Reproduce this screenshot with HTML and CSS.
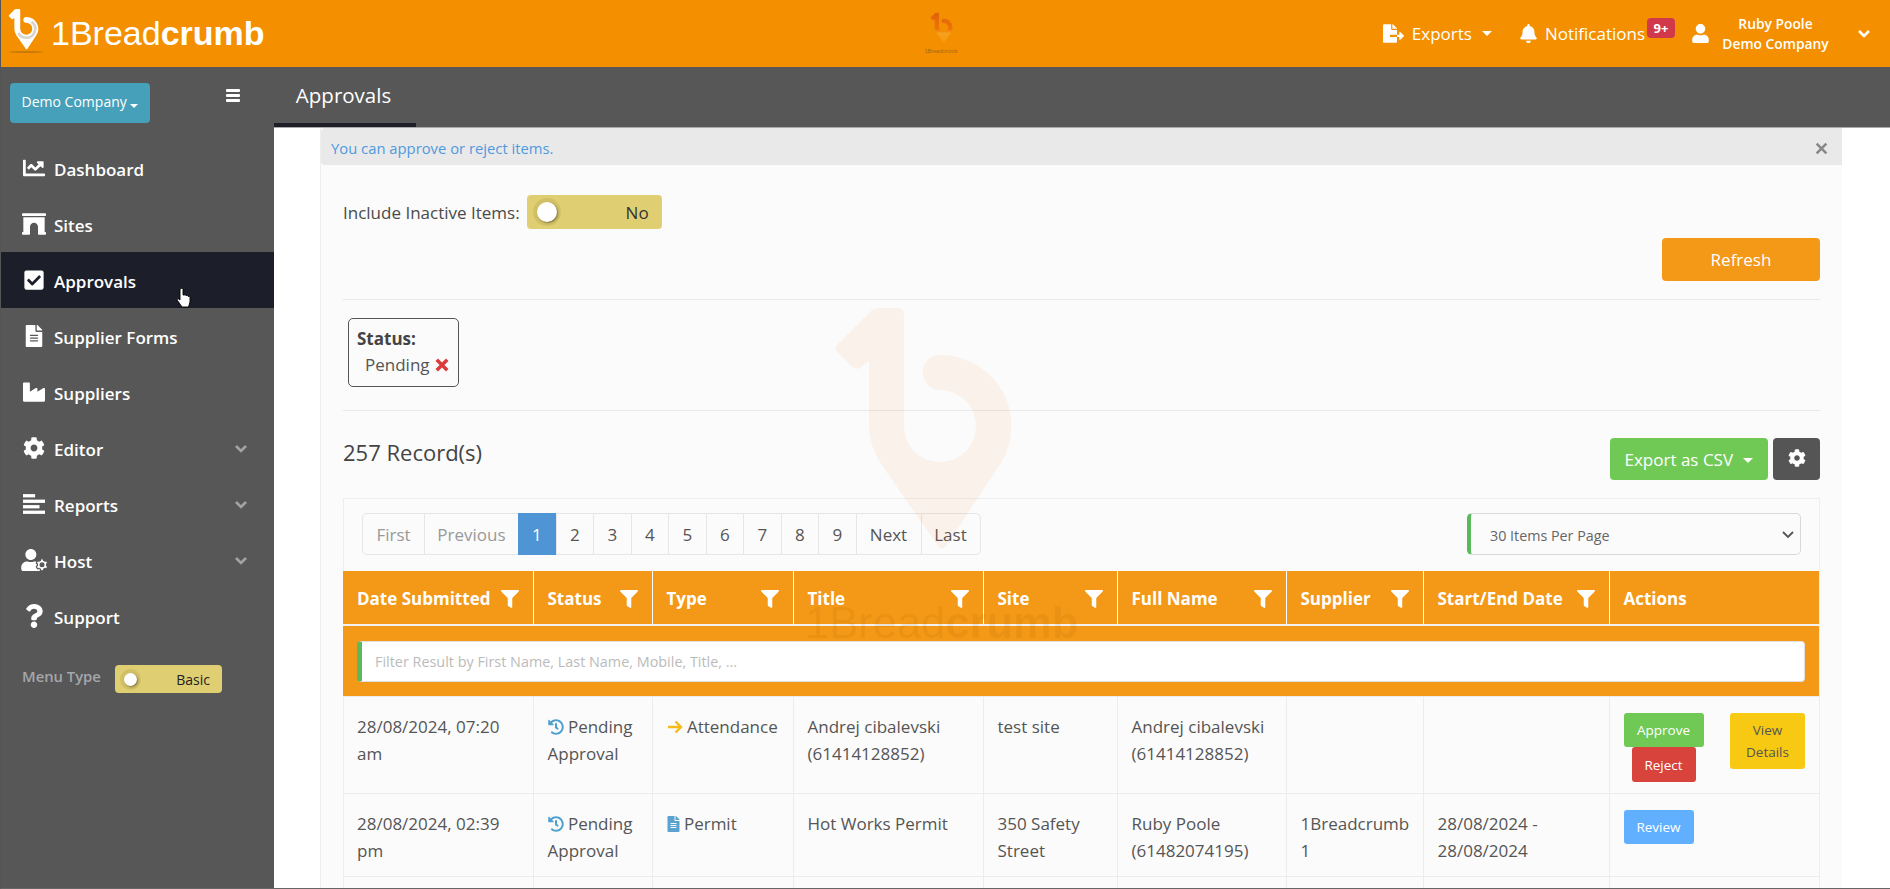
FILE: index.html
```html
<!DOCTYPE html>
<html lang="en">
<head>
    <meta charset="UTF-8">
    <title>Approvals</title>
    <link rel="stylesheet" href="styles.css">
</head>
<body>
<svg class="defs">
    <defs>
        <path id="pin" d="M97 17 L116 17 Q123 17 123 24 L123 135 A36 36 0 1 0 159 99 A17.5 17.5 0 0 1 159 64 A71 71 0 0 1 220 172 L165 255 Q161 260 157 255 L100 173 A71 71 0 0 1 88 135 L88 70 L79 77 Q74 79 70 75 L56 61 Q53 57 57 53 L90 20 Q93 17 97 17 Z"/>
        <path id="i-cog" d="M487.4 315.7l-42.6-24.6c4.3-23.2 4.3-47 0-70.2l42.6-24.6c4.9-2.8 7.1-8.6 5.5-14-11.1-35.6-30-67.8-54.7-94.6-3.8-4.1-10-5.1-14.8-2.3L380.8 110c-17.9-15.4-38.5-27.3-60.8-35.1V25.8c0-5.6-3.9-10.5-9.4-11.7-36.7-8.2-74.3-7.8-109.2 0-5.5 1.2-9.4 6.1-9.4 11.7V75c-22.2 7.9-42.8 19.8-60.8 35.1L88.7 85.5c-4.9-2.8-11-1.9-14.8 2.3-24.7 26.7-43.6 58.9-54.7 94.6-1.7 5.4.6 11.2 5.5 14L67.3 221c-4.3 23.2-4.3 47 0 70.2l-42.6 24.6c-4.9 2.8-7.1 8.6-5.5 14 11.1 35.6 30 67.8 54.7 94.6 3.8 4.1 10 5.1 14.8 2.3l42.6-24.6c17.9 15.4 38.5 27.3 60.8 35.1v49.2c0 5.6 3.9 10.5 9.4 11.7 36.7 8.2 74.3 7.8 109.2 0 5.5-1.2 9.4-6.1 9.4-11.7v-49.2c22.2-7.9 42.8-19.8 60.8-35.1l42.6 24.6c4.9 2.8 11 1.9 14.8-2.3 24.7-26.7 43.6-58.9 54.7-94.6 1.5-5.5-.7-11.3-5.6-14.1zM256 336c-44.1 0-80-35.9-80-80s35.9-80 80-80 80 35.9 80 80-35.9 80-80 80z"/>
        <path id="i-filter" d="M487.976 0H24.028C2.71 0-8.047 25.866 7.058 40.971L192 225.941V432c0 7.831 3.821 15.17 10.237 19.662l80 55.98C298.02 518.69 320 507.493 320 487.98V225.941l184.947-184.97C520.021 25.896 509.338 0 487.976 0z"/>
        <path id="i-history" d="M504 255.531c.253 136.64-111.18 248.372-247.82 248.468-59.015.042-113.223-20.53-155.822-54.911-11.077-8.94-11.905-25.541-1.839-35.607l11.267-11.267c8.609-8.609 22.353-9.551 31.891-1.984C173.062 425.135 212.781 440 256 440c101.705 0 184-82.311 184-184 0-101.705-82.311-184-184-184-48.814 0-93.149 18.969-126.068 49.932l50.754 50.754c10.08 10.08 2.941 27.314-11.313 27.314H24c-8.837 0-16-7.163-16-16V38.627c0-14.254 17.234-21.393 27.314-11.314l49.372 49.372C129.209 34.136 189.552 8 256 8c136.81 0 247.747 110.78 248 247.531zm-180.912 78.784l9.823-12.63c8.138-10.463 6.253-25.542-4.21-33.679L288 256.349V152c0-13.255-10.745-24-24-24h-16c-13.255 0-24 10.745-24 24v135.651l65.409 50.874c10.463 8.137 25.541 6.253 33.679-4.21z"/>
        <path id="i-file" d="M224 136V0H24C10.7 0 0 10.7 0 24v464c0 13.3 10.7 24 24 24h336c13.3 0 24-10.7 24-24V160H248c-13.2 0-24-10.8-24-24zm64 236c0 6.6-5.4 12-12 12H108c-6.6 0-12-5.4-12-12v-8c0-6.6 5.4-12 12-12h168c6.6 0 12 5.4 12 12v8zm0-64c0 6.6-5.4 12-12 12H108c-6.6 0-12-5.4-12-12v-8c0-6.6 5.4-12 12-12h168c6.6 0 12 5.4 12 12v8zm0-72v8c0 6.6-5.4 12-12 12H108c-6.6 0-12-5.4-12-12v-8c0-6.6 5.4-12 12-12h168c6.6 0 12 5.4 12 12zm96-114.1v6.1H256V0h6.1c6.4 0 12.5 2.5 17 7l97.9 98c4.5 4.5 7 10.6 7 16.9z"/>
        <path id="i-user" d="M224 256c70.7 0 128-57.3 128-128S294.7 0 224 0 96 57.3 96 128s57.3 128 128 128zm89.6 32h-16.7c-22.2 10.2-46.9 16-72.9 16s-50.6-5.8-72.9-16h-16.7C60.2 288 0 348.2 0 422.4V464c0 26.5 21.5 48 48 48h352c26.5 0 48-21.5 48-48v-41.6c0-74.2-60.2-134.4-134.4-134.4z"/>
        <linearGradient id="small-pin" x1="0" y1="0" x2="0" y2="1">
            <stop offset="0" stop-color="#e2610c"/>
            <stop offset="0.55" stop-color="#ec7408"/>
            <stop offset="0.68" stop-color="#f6a01c"/>
            <stop offset="1" stop-color="#f59a10"/>
        </linearGradient>
    </defs>
</svg>

<div class="app">
    <header class="topbar">
        <div class="brand">
            <span class="brand-mark">
                <svg class="brand-pin" viewBox="50 15 185 248"><use href="#pin"/><path class="brand-shade" d="M190 92 A53 53 0 0 1 159 188 A53 53 0 0 1 112 160"/></svg>
                <span class="brand-shadow"></span>
            </span>
            <span class="brand-name">1Bread<b>crumb</b></span>
        </div>
        <div class="client-logo">
            <svg class="client-pin" viewBox="50 15 185 248"><use href="#pin"/></svg>
            <span class="client-name">1Breadcrumb</span>
        </div>
        <nav class="topnav">
            <a class="topnav-item">
                <svg class="top-icon icon-export" viewBox="0 0 576 512"><path d="M384 121.9c0-6.3-2.5-12.4-7-16.9L279.1 7c-4.5-4.5-10.6-7-17-7H256v128h128zM571 308l-95.7-96.4c-10.1-10.1-27.4-3-27.4 11.3V288h-64v64h64v65.2c0 14.3 17.3 21.4 27.4 11.3L571 332c6.6-6.6 6.6-17.4 0-24zm-379 28v-32c0-8.8 7.2-16 16-16h176V160H248c-13.2 0-24-10.8-24-24V0H24C10.7 0 0 10.7 0 24v464c0 13.3 10.7 24 24 24h336c13.3 0 24-10.7 24-24V352H208c-8.8 0-16-7.2-16-16z"/></svg>
                Exports <span class="caret"></span>
            </a>
            <a class="topnav-item notif">
                <svg class="top-icon icon-bell" viewBox="0 0 448 512"><path d="M224 512c35.32 0 63.97-28.65 63.97-64H160.03c0 35.35 28.65 64 63.97 64zm215.39-149.71c-19.32-20.76-55.47-51.99-55.47-154.29 0-77.7-54.48-139.9-127.94-155.16V32c0-17.67-14.32-32-31.98-32s-31.98 14.33-31.98 32v20.84C118.56 68.1 64.08 130.3 64.08 208c0 102.3-36.15 133.53-55.47 154.29-6 6.45-8.66 14.16-8.61 21.71.11 16.4 12.98 32 32.1 32h383.8c19.12 0 32-15.6 32.1-32 .05-7.55-2.61-15.27-8.61-21.71z"/></svg>
                Notifications
                <span class="badge">9+</span>
            </a>
            <a class="topnav-user">
                <svg class="top-icon icon-user" viewBox="0 0 448 512"><use href="#i-user"/></svg>
                <span class="user-name">Ruby Poole<br>Demo Company</span>
                <svg class="user-chevron" viewBox="0 0 14 10"><path d="M2 2 L7 7 L12 2"/></svg>
            </a>
        </nav>
    </header>

    <div class="shell">
        <aside class="sidebar">
            <div class="sidebar-top">
                <button class="company-btn">Demo Company <span class="caret caret-small"></span></button>
                <svg class="hamburger" viewBox="0 0 14 13"><rect width="14" height="3" rx="1"/><rect y="5" width="14" height="3" rx="1"/><rect y="10" width="14" height="3" rx="1"/></svg>
            </div>
            <ul class="menu">
                <li class="menu-item">
                    <svg class="menu-icon" viewBox="0 0 512 512"><path d="M496 384H64V80c0-8.84-7.16-16-16-16H16C7.16 64 0 71.16 0 80v336c0 17.67 14.33 32 32 32h464c8.84 0 16-7.16 16-16v-32c0-8.84-7.16-16-16-16zM464 96H345.94c-21.38 0-32.09 25.85-16.97 40.97l32.4 32.4L288 242.75l-73.37-73.37c-12.5-12.5-32.76-12.5-45.25 0l-68.69 68.69c-6.25 6.25-6.25 16.38 0 22.63l22.62 22.62c6.25 6.25 16.38 6.25 22.63 0L192 237.25l73.37 73.37c12.5 12.5 32.76 12.5 45.25 0l96-96 32.4 32.4c15.12 15.12 40.97 4.41 40.97-16.97V112c.01-8.84-7.15-16-15.99-16z"/></svg>
                    Dashboard
                </li>
                <li class="menu-item">
                    <svg class="menu-icon" viewBox="0 0 576 512"><path d="M560 448h-16V96H32v352H16.02c-8.84 0-16 7.16-16 16v32c0 8.84 7.16 16 16 16H176c8.84 0 16-7.16 16-16V320c0-53.02 42.98-96 96-96s96 42.98 96 96l.02 160v16c0 8.84 7.2 16 16.04 16H560c8.84 0 16-7.16 16-16v-32c0-8.84-7.16-16-16-16zm0-448H16C7.16 0 0 7.16 0 16v32c0 8.84 7.16 16 16 16h544c8.84 0 16-7.16 16-16V16c0-8.84-7.16-16-16-16z"/></svg>
                    Sites
                </li>
                <li class="menu-item active">
                    <svg class="menu-icon" viewBox="0 0 448 512"><path d="M400 480H48c-26.51 0-48-21.49-48-48V80c0-26.51 21.49-48 48-48h352c26.51 0 48 21.49 48 48v352c0 26.51-21.49 48-48 48zm-204.686-98.059l184-184c6.248-6.248 6.248-16.379 0-22.627l-22.627-22.627c-6.248-6.248-16.379-6.249-22.628 0L184 302.745l-70.059-70.059c-6.248-6.248-16.379-6.248-22.628 0l-22.627 22.627c-6.248 6.248-6.248 16.379 0 22.627l104 104c6.249 6.25 16.379 6.25 22.628.001z"/></svg>
                    Approvals
                </li>
                <li class="menu-item">
                    <svg class="menu-icon" viewBox="0 0 384 512"><use href="#i-file"/></svg>
                    Supplier Forms
                </li>
                <li class="menu-item">
                    <svg class="menu-icon" viewBox="0 0 512 512"><path d="M475.115 163.781L336 252.309v-68.28c0-18.916-20.931-30.399-36.885-20.248L160 252.309V56c0-13.255-10.745-24-24-24H24C10.745 32 0 42.745 0 56v400c0 13.255 10.745 24 24 24h464c13.255 0 24-10.745 24-24V184.029c0-18.917-20.931-30.399-36.885-20.248z"/></svg>
                    Suppliers
                </li>
                <li class="menu-item">
                    <svg class="menu-icon" viewBox="0 0 512 512"><use href="#i-cog"/></svg>
                    Editor
                    <svg class="menu-chevron" viewBox="0 0 14 10"><path d="M2 2 L7 7 L12 2"/></svg>
                </li>
                <li class="menu-item">
                    <svg class="menu-icon" viewBox="0 0 20 20"><rect x="0" y="1" width="11" height="3"/><rect x="0" y="6" width="20" height="3"/><rect x="0" y="11" width="15" height="3"/><rect x="0" y="16" width="20" height="3"/></svg>
                    Reports
                    <svg class="menu-chevron" viewBox="0 0 14 10"><path d="M2 2 L7 7 L12 2"/></svg>
                </li>
                <li class="menu-item">
                    <svg class="menu-icon menu-icon-host" viewBox="0 0 640 512"><use href="#i-user"/><use class="host-cog" href="#i-cog" transform="translate(340 225) scale(.56)"/></svg>
                    Host
                    <svg class="menu-chevron" viewBox="0 0 14 10"><path d="M2 2 L7 7 L12 2"/></svg>
                </li>
                <li class="menu-item">
                    <svg class="menu-icon menu-icon-q" viewBox="0 0 384 512"><path d="M202.021 0C122.202 0 70.503 32.703 29.914 91.026c-7.363 10.58-5.093 25.086 5.178 32.874l43.138 32.709c10.373 7.865 25.132 6.026 33.253-4.148 25.049-31.381 43.63-49.449 82.757-49.449 30.764 0 68.816 19.799 68.816 49.631 0 22.552-18.617 34.134-48.993 51.164-35.423 19.86-82.299 44.576-82.299 106.405V320c0 13.255 10.745 24 24 24h72.471c13.255 0 24-10.745 24-24v-5.773c0-42.86 125.268-44.645 125.268-160.627C377.504 66.256 286.902 0 202.021 0zM192 373.459c-38.196 0-69.271 31.075-69.271 69.271 0 38.195 31.075 69.27 69.271 69.27s69.271-31.075 69.271-69.271-31.075-69.27-69.271-69.27z"/></svg>
                    Support
                </li>
            </ul>
            <div class="menu-type">
                <span class="menu-type-label">Menu Type</span>
                <span class="toggle toggle-small"><span class="knob"></span><span class="toggle-text">Basic</span></span>
            </div>
        </aside>

        <main class="main">
            <div class="tabbar">
                <a class="tab">Approvals</a>
            </div>
            <div class="content">
                <section class="card">
                    <div class="alert">
                        You can approve or reject items.
                        <svg class="alert-close" viewBox="0 0 12 12"><path d="M1.500 1.500 L10.500 10.500 M10.500 1.500 L1.500 10.500"/></svg>
                    </div>
                    <div class="card-body">
                        <div class="inactive-row">
                            <span class="inactive-label">Include Inactive Items:</span>
                            <span class="toggle"><span class="knob"></span><span class="toggle-text">No</span></span>
                        </div>
                        <div class="refresh-row">
                            <button class="btn btn-refresh">Refresh</button>
                        </div>
                        <hr class="divider">
                        <div class="status-box">
                            <strong>Status:</strong>
                            <div class="status-value">Pending
                                <svg class="status-x" viewBox="0 0 12 12"><path d="M1.500 1.500 L10.500 10.500 M10.500 1.500 L1.500 10.500"/></svg>
                            </div>
                        </div>
                        <hr class="divider divider-status">
                        <div class="records-row">
                            <h2 class="records">257 Record(s)</h2>
                            <div class="records-actions">
                                <button class="btn btn-export">Export as CSV <span class="caret"></span></button>
                                <button class="btn btn-gear"><svg viewBox="0 0 512 512"><use href="#i-cog"/></svg></button>
                            </div>
                        </div>

                        <div class="panel">
                            <div class="panel-tools">
                                <ul class="pager">
                                    <li class="pager-first muted">First</li>
                                    <li class="muted">Previous</li>
                                    <li class="current">1</li>
                                    <li>2</li>
                                    <li>3</li>
                                    <li>4</li>
                                    <li>5</li>
                                    <li>6</li>
                                    <li>7</li>
                                    <li>8</li>
                                    <li>9</li>
                                    <li>Next</li>
                                    <li class="pager-last">Last</li>
                                </ul>
                                <div class="per-page">
                                    30 Items Per Page
                                    <svg viewBox="0 0 14 10"><path d="M2 2 L7 7 L12 2"/></svg>
                                </div>
                            </div>
                            <table class="grid">
                                <colgroup>
                                    <col class="c-date"><col class="c-status"><col class="c-type"><col class="c-title"><col class="c-site"><col class="c-name"><col class="c-supplier"><col class="c-range"><col class="c-actions">
                                </colgroup>
                                <thead>
                                    <tr class="head-row">
                                        <th><div class="th-in">Date Submitted <svg class="funnel" viewBox="0 0 512 512"><use href="#i-filter"/></svg></div></th>
                                        <th><div class="th-in">Status <svg class="funnel" viewBox="0 0 512 512"><use href="#i-filter"/></svg></div></th>
                                        <th><div class="th-in">Type <svg class="funnel" viewBox="0 0 512 512"><use href="#i-filter"/></svg></div></th>
                                        <th><div class="th-in">Title <svg class="funnel" viewBox="0 0 512 512"><use href="#i-filter"/></svg></div></th>
                                        <th><div class="th-in">Site <svg class="funnel" viewBox="0 0 512 512"><use href="#i-filter"/></svg></div></th>
                                        <th><div class="th-in">Full Name <svg class="funnel" viewBox="0 0 512 512"><use href="#i-filter"/></svg></div></th>
                                        <th><div class="th-in">Supplier <svg class="funnel" viewBox="0 0 512 512"><use href="#i-filter"/></svg></div></th>
                                        <th><div class="th-in">Start/End Date <svg class="funnel" viewBox="0 0 512 512"><use href="#i-filter"/></svg></div></th>
                                        <th><div class="th-in">Actions</div></th>
                                    </tr>
                                    <tr class="filter-row">
                                        <th colspan="9"><div class="filter-input">Filter Result by First Name, Last Name, Mobile, Title, ...</div></th>
                                    </tr>
                                </thead>
                                <tbody>
                                    <tr>
                                        <td>28/08/2024, 07:20 am</td>
                                        <td><svg class="cell-icon ic-blue" viewBox="0 0 512 512"><use href="#i-history"/></svg> Pending Approval</td>
                                        <td><svg class="cell-icon ic-yellow" viewBox="0 0 16 14"><path d="M1 7 H14 M8.500 1.500 L14 7 L8.500 12.500"/></svg> Attendance</td>
                                        <td>Andrej cibalevski (61414128852)</td>
                                        <td>test site</td>
                                        <td>Andrej cibalevski (61414128852)</td>
                                        <td></td>
                                        <td></td>
                                        <td>
                                            <div class="actions">
                                                <div class="actions-main">
                                                    <button class="btn btn-sm btn-approve">Approve</button>
                                                    <button class="btn btn-sm btn-reject">Reject</button>
                                                </div>
                                                <button class="btn btn-sm btn-view">View Details</button>
                                            </div>
                                        </td>
                                    </tr>
                                    <tr>
                                        <td>28/08/2024, 02:39 pm</td>
                                        <td><svg class="cell-icon ic-blue" viewBox="0 0 512 512"><use href="#i-history"/></svg> Pending Approval</td>
                                        <td><svg class="cell-icon ic-file" viewBox="0 0 384 512"><use href="#i-file"/></svg> Permit</td>
                                        <td>Hot Works Permit</td>
                                        <td>350 Safety Street</td>
                                        <td>Ruby Poole (61482074195)</td>
                                        <td>1Breadcrumb 1</td>
                                        <td>28/08/2024 - 28/08/2024</td>
                                        <td><button class="btn btn-sm btn-review">Review</button></td>
                                    </tr>
                                    <tr class="row-cut">
                                        <td></td><td></td><td></td><td></td><td></td><td></td><td></td><td></td><td></td>
                                    </tr>
                                </tbody>
                            </table>
                        </div>
                    </div>
                </section>
            </div>
        </main>
    </div>

    <!-- faint logo laid over the page -->
    <div class="watermark">
        <svg class="watermark-pin" viewBox="50 15 185 248"><use href="#pin"/></svg>
        <span class="watermark-name">1Bread<b>crumb</b></span>
    </div>

    <svg class="hand" viewBox="0 0 15 21"><path d="M5 1.500 Q6.300 .5 7 2 V8 L8 8 Q9.500 7.500 10 8.500 Q11.500 8 12 9.300 Q13.500 9 14 10.500 V15 L12.500 20 H6 L1.500 13.500 Q.8 12 2 11.500 L4 13 V2.500 Q4 2 5 1.500 Z"/></svg>
</div>
</body>
</html>
```
FILE: styles.css
```css
* {
    box-sizing: border-box;
}
html, body {
    margin: 0;
    height: 889px;
    overflow: hidden;
}
body {
    font-family: "Open Sans", Arial, sans-serif;
    font-size: 17px;
    color: #4a4a4a;
    background: #fff;
}
.defs {
    position: absolute;
    width: 0;
    height: 0;
}
ul {
    list-style: none;
    margin: 0;
    padding: 0;
}
button {
    font-family: inherit;
    border: none;
    cursor: pointer;
}
svg {
    fill: currentColor;
    flex: none;
}
.app {
    position: relative;
    width: 1890px;
    height: 889px;
    overflow: hidden;
    border-left: 1px solid #555;
    border-bottom: 1px solid #666;
}
.caret {
    display: inline-block;
    width: 0;
    height: 0;
    margin-left: 6px;
    vertical-align: 3px;
    border-top: 5px solid currentColor;
    border-left: 5px solid transparent;
    border-right: 5px solid transparent;
}
.caret-small {
    margin-left: 0;
    vertical-align: -1px;
    border-top-width: 4px;
    border-left-width: 4px;
    border-right-width: 4px;
}

/* top bar */
.topbar {
    height: 67px;
    background: #f49000;
    color: #fff;
    display: flex;
    align-items: center;
    position: relative;
}
.brand {
    display: flex;
    align-items: center;
    width: 800px;
    padding-left: 7px;
}
.brand-mark {
    position: relative;
    width: 37px;
    height: 45px;
    margin-right: 6px;
    margin-top: -6px;
}
.brand-pin {
    width: 31px;
    height: 43px;
}
.brand-shade {
    fill: none;
    stroke: #d8d4ce;
    stroke-width: 16;
}
.brand-shadow {
    position: absolute;
    left: 1px;
    top: 43px;
    width: 35px;
    height: 2px;
    border-radius: 50%;
    background: #c87a08;
}
.brand-name {
    font-family: "Liberation Sans", Arial, sans-serif;
    font-size: 34px;
}
.client-logo {
    position: absolute;
    left: 921px;
    top: 12px;
    width: 38px;
    display: flex;
    flex-direction: column;
    align-items: center;
    color: #a8641c;
}
.client-pin {
    width: 23px;
    height: 32px;
    fill: url(#small-pin);
}
.client-name {
    font-family: "Liberation Sans", Arial, sans-serif;
    font-size: 5.500px;
    line-height: 8px;
    margin-top: 3px;
}
.topnav {
    margin-left: auto;
    display: flex;
    align-items: center;
    height: 100%;
}
.topnav-item {
    display: flex;
    align-items: center;
    gap: 8px;
}
.topnav-item .caret {
    margin-left: 2px;
    vertical-align: 0;
}
.notif {
    position: relative;
    margin-left: 28px;
}
.top-icon {
    width: 21px;
    height: 19px;
}
.icon-bell {
    width: 17px;
}
.icon-user {
    width: 17px;
}
.badge {
    position: absolute;
    right: -30px;
    top: -4px;
    width: 28px;
    height: 20px;
    background: #d1384a;
    border-radius: 4px;
    font-size: 13px;
    font-weight: 700;
    line-height: 20px;
    text-align: center;
}
.topnav-user {
    display: flex;
    align-items: center;
    margin-left: 47px;
    padding-right: 19px;
}
.user-name {
    width: 133px;
    text-align: center;
    font-size: 13.800px;
    font-weight: 600;
    line-height: 20px;
}
.user-chevron {
    width: 14px;
    height: 10px;
    margin-left: 15px;
    fill: none;
    stroke: #fff;
    stroke-width: 2.6;
}

/* sidebar */
.shell {
    display: flex;
    height: 821px;
}
.sidebar {
    width: 273px;
    background: #575757;
    color: #fff;
    flex: none;
}
.sidebar-top {
    display: flex;
    align-items: flex-start;
    padding: 16px 0 17px 9px;
}
.company-btn {
    width: 140px;
    height: 40px;
    padding: 0 0 3px;
    background: #47a0b9;
    color: #fff;
    border-radius: 4px;
    font-size: 14px;
}
.hamburger {
    width: 14px;
    height: 13px;
    margin: 6px 0 0 76px;
}
.menu-item {
    position: relative;
    height: 56px;
    display: flex;
    align-items: center;
    padding: 3px 0 0 21px;
    font-weight: 600;
    font-size: 17px;
}
.menu-item.active {
    background: #1c1f2a;
}
.menu-icon {
    width: 24px;
    height: 22px;
    margin: -3px 8px 0 0;
}
.menu-icon-q {
    height: 24px;
}
.menu-icon-host {
    width: 28px;
    margin-left: -1px;
    margin-right: 5px;
}
.host-cog {
    stroke: #575757;
    stroke-width: 50;
}
.menu-chevron {
    position: absolute;
    left: 233px;
    top: 24px;
    width: 14px;
    height: 10px;
    fill: none;
    stroke: #a0a4a8;
    stroke-width: 2.6;
}
.menu-type {
    display: flex;
    align-items: center;
    margin-top: 21px;
    padding-left: 21px;
}
.menu-type-label {
    width: 93px;
    margin-top: -6px;
    color: #a4a7ab;
    font-size: 14.800px;
    font-weight: 600;
}

/* toggles */
.toggle {
    position: relative;
    display: flex;
    align-items: center;
    justify-content: flex-end;
    width: 135px;
    height: 34px;
    padding-right: 13px;
    background: #e0cf72;
    border-radius: 4px;
    color: #333;
}
.knob {
    position: absolute;
    left: 10px;
    top: 7px;
    width: 20px;
    height: 20px;
    border-radius: 50%;
    background: #fff;
    box-shadow: 1px 1px 2px rgba(0,0,0,.4), 0 0 0 4px rgba(150,130,50,.18);
}
.toggle-small {
    width: 107px;
    height: 28px;
    font-size: 14px;
    padding-right: 12px;
}
.toggle-small .knob {
    left: 9px;
    top: 8px;
    width: 13px;
    height: 13px;
}
.toggle-small .toggle-text {
    color: #222;
}

/* main area */
.main {
    flex: 1;
    min-width: 0;
}
.tabbar {
    height: 61px;
    background: #575757;
    border-bottom: 1px solid #aaa;
    display: flex;
}
.tab {
    width: 142px;
    height: 60px;
    padding: 14px 3px 0 0;
    text-align: center;
    color: #fff;
    font-size: 20.500px;
    border-bottom: 4px solid #1c1f2a;
}
.content {
    padding: 0 48px 0 46px;
}
.card {
    background: #fbfbfb;
    border-left: 1px solid #eee;
}
.alert {
    display: flex;
    align-items: center;
    justify-content: space-between;
    height: 37px;
    padding: 3px 14px 0 10px;
    background: #e9e9e9;
    border-radius: 4px 0 0 4px;
    color: #4f9ade;
    font-size: 14.800px;
}
.alert-close {
    width: 13px;
    height: 13px;
    fill: none;
    stroke: #888;
    stroke-width: 2.400;
}
.card-body {
    padding: 0 22px;
}
.inactive-row {
    display: flex;
    align-items: center;
    gap: 7px;
    padding-top: 30px;
}
.refresh-row {
    display: flex;
    justify-content: flex-end;
    margin-top: 9px;
}
.btn {
    border-radius: 4px;
    color: #fff;
    font-size: 17px;
}
.btn-refresh {
    width: 158px;
    height: 43px;
    background: #f39817;
}
.divider {
    border: none;
    border-top: 1px solid #e8e8e8;
    margin: 18px 0 0;
}
.status-box {
    width: 111px;
    height: 69px;
    margin: 18px 0 0 5px;
    padding: 7px 0 7px 8px;
    border: 1px solid #555;
    border-radius: 5px;
    line-height: 26px;
    color: #444;
}
.status-value {
    display: flex;
    align-items: center;
    gap: 5px;
    margin-left: 8px;
    color: #555;
}
.status-x {
    width: 14px;
    height: 14px;
    fill: none;
    stroke: #dc3b3b;
    stroke-width: 3;
}
.divider-status {
    margin-top: 23px;
}
.records-row {
    display: flex;
    align-items: flex-start;
    justify-content: space-between;
    margin-top: 27px;
}
.records {
    margin: 0;
    font-size: 22px;
    font-weight: 400;
    line-height: 28px;
    color: #444;
}
.records-actions {
    display: flex;
    gap: 5px;
}
.btn-export {
    width: 158px;
    height: 42px;
    background: #70c955;
}
.btn-gear {
    width: 47px;
    height: 42px;
    background: #555;
    padding-top: 3px;
}
.btn-gear svg {
    width: 18px;
    height: 18px;
}

/* table panel */
.panel {
    margin-top: 18px;
    border: 1px solid #eee;
    border-bottom: none;
}
.panel-tools {
    display: flex;
    justify-content: space-between;
    padding: 14px 18px 16px 18px;
}
.pager {
    display: flex;
    height: 42px;
    border: 1px solid #e6e6e6;
    border-radius: 5px;
    color: #555;
}
.pager li {
    display: flex;
    align-items: center;
    justify-content: center;
    width: 37.500px;
    border-left: 1px solid #e6e6e6;
}
.pager li.pager-first {
    width: 61px;
    border-left: none;
}
.pager li:nth-child(2) {
    width: 94px;
}
.pager li:nth-child(12) {
    width: 65px;
}
.pager li:nth-child(13) {
    width: 59px;
}
.pager .muted {
    color: #999;
}
.pager .current {
    background: #4f94d4;
    color: #fff;
    margin: -1px 0;
    border-left: none;
}
.per-page {
    display: flex;
    align-items: center;
    justify-content: space-between;
    width: 334px;
    height: 42px;
    padding: 2px 5px 0 19px;
    border: 1px solid #d8d8d8;
    border-left: 4px solid #5cb85c;
    border-radius: 5px;
    font-size: 14.300px;
    color: #666;
}
.per-page svg {
    width: 14px;
    height: 10px;
    fill: none;
    stroke: #555;
    stroke-width: 1.800;
}
.grid {
    width: 1476px;
    margin-left: -1px;
    table-layout: fixed;
    border-collapse: collapse;
}
.c-date { width: 190px; }
.c-status { width: 119px; }
.c-type { width: 141px; }
.c-title { width: 190px; }
.c-site { width: 134px; }
.c-name { width: 169px; }
.c-supplier { width: 137px; }
.c-range { width: 186px; }
.c-actions { width: 210px; }
.head-row th {
    height: 54px;
    padding: 2px 14px 0;
    background: #f39817;
    color: #fff;
    text-align: left;
    font-weight: 700;
    font-size: 17px;
    border-left: 1px solid #fff;
    border-bottom: 2px solid #f2f2f2;
}
.head-row th:first-child {
    border-left: none;
}
.th-in {
    display: flex;
    align-items: center;
    justify-content: space-between;
}
.funnel {
    width: 18px;
    height: 18px;
}
.filter-row th {
    height: 70px;
    padding: 15px 14px 14px 14px;
    background: #f39817;
}
.filter-input {
    height: 41px;
    line-height: 39px;
    padding-left: 13px;
    background: #fff;
    border: 1px solid #e0e0e0;
    border-left: 5px solid #5cb85c;
    border-radius: 4px;
    font-size: 14.400px;
    font-weight: 400;
    text-align: left;
    color: #bbb;
}
.grid td {
    padding: 16px 14px 12px;
    vertical-align: top;
    line-height: 27px;
    color: #555;
    border: 1px solid #ececec;
}
.grid td:first-child {
    border-left: none;
}
.grid td:last-child {
    border-right: none;
}
.row-cut td {
    height: 60px;
}
.cell-icon {
    width: 16px;
    height: 16px;
    vertical-align: -2px;
}
.ic-blue {
    color: #4f9fcf;
}
.ic-yellow {
    fill: none;
    stroke: #f5bb1a;
    stroke-width: 2.400;
}
.ic-file {
    width: 13px;
    color: #5aa2d0;
}
.btn-sm {
    height: 34px;
    font-size: 13.500px;
    font-weight: 500;
    border-radius: 3px;
}
.actions {
    display: flex;
    justify-content: space-between;
    align-items: flex-start;
    margin-bottom: -1px;
}
.actions-main {
    display: flex;
    flex-direction: column;
    align-items: center;
}
.btn-approve {
    width: 80px;
    background: #70c955;
}
.btn-reject {
    width: 64px;
    height: 35px;
    background: #d8433c;
}
.btn-view {
    width: 75px;
    height: 56px;
    padding: 0 8px;
    background: #f7c913;
    color: #555;
    font-weight: 400;
    line-height: 22px;
}
.btn-review {
    display: block;
    width: 70px;
    background: #61b0ff;
}

/* overlays */
.watermark {
    position: absolute;
    left: 804px;
    top: 306px;
    width: 274px;
    display: flex;
    flex-direction: column;
    align-items: flex-start;
    pointer-events: none;
}
.watermark-pin {
    width: 185px;
    height: 248px;
    margin-left: 26px;
    fill: rgba(244,130,20,.07);
}
.watermark-name {
    font-family: "Liberation Sans", Arial, sans-serif;
    font-size: 43.500px;
    line-height: 50px;
    margin-top: 44px;
    color: rgba(150,80,0,.09);
}
.hand {
    position: absolute;
    left: 175px;
    top: 287px;
    width: 15px;
    height: 21px;
    fill: #fff;
    stroke: #000;
    stroke-width: .9;
}
```
